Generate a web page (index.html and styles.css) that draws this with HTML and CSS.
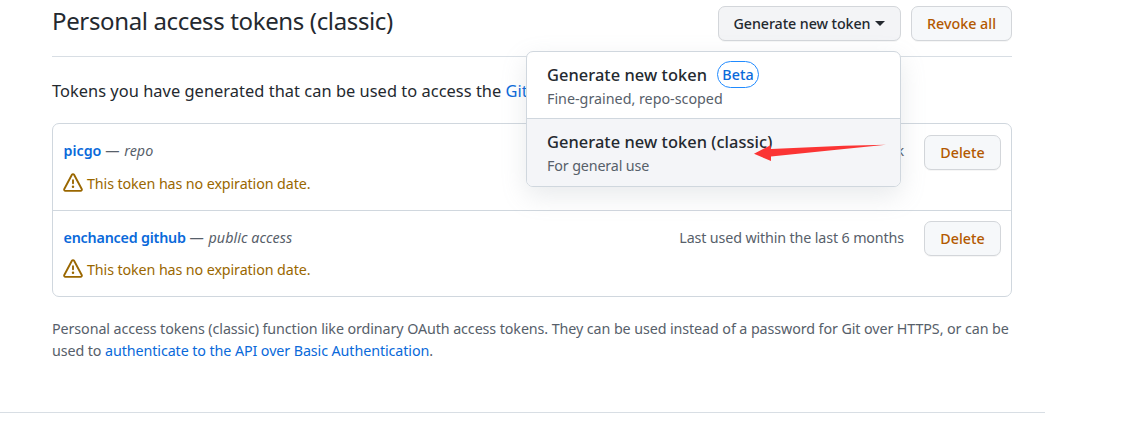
FILE: index.html
```
<!DOCTYPE html>
<html lang="en">
<head>
<meta charset="utf-8">
<title>Personal access tokens (classic)</title>
<link rel="stylesheet" href="styles.css">
</head>
<body>
<main class="page">
  <section class="content">
    <header class="subhead">
      <h2 class="title">Personal access tokens (classic)</h2>
      <div class="actions">
        <div class="dropdown">
          <button class="btn btn-open">Generate new token<span class="caret"></span></button>
          <div class="menu">
            <a class="menu-item">
              <span class="menu-title">Generate new token<span class="label">Beta</span></span>
              <span class="menu-desc">Fine-grained, repo-scoped</span>
            </a>
            <a class="menu-item menu-item-active">
              <span class="menu-title">Generate new token (classic)</span>
              <span class="menu-desc general">For general use</span>
            </a>
            <svg class="arrow" width="132" height="18" viewBox="0 0 132 18"><path d="M0 9.7L16.5 1.2L17 5L90 1.8L132 0.8L90 5L17 12.5V17Z" fill="#fb3434"/></svg>
          </div>
        </div>
        <button class="btn btn-danger btn-revoke">Revoke all</button>
      </div>
    </header>
    <p class="intro">Tokens you have generated that can be used to access the <a class="link">GitHub API</a>.</p>
    <ul class="tokens">
      <li class="token">
        <div class="info">
          <div class="name"><a class="link strong">picgo</a> <span>—</span> <em>repo</em></div>
          <div class="warning"><svg class="alert" viewBox="0 0 16 16"><path d="M6.457 1.047c.659-1.234 2.427-1.234 3.086 0l6.082 11.378A1.75 1.75 0 0 1 14.082 15H1.918a1.75 1.75 0 0 1-1.543-2.575Zm1.763.707a.25.25 0 0 0-.44 0L1.698 13.132a.25.25 0 0 0 .22.368h12.164a.25.25 0 0 0 .22-.368Zm.53 3.996v2.5a.75.75 0 0 1-1.5 0v-2.5a.75.75 0 0 1 1.5 0ZM9 11a1 1 0 1 1-2 0 1 1 0 0 1 2 0Z"/></svg><span>This token has no expiration date.</span></div>
        </div>
        <span class="used">Last used within the last week</span>
        <button class="btn btn-danger btn-delete">Delete</button>
      </li>
      <li class="token">
        <div class="info">
          <div class="name"><a class="link strong name-long">enchanced github</a> <span>—</span> <em>public access</em></div>
          <div class="warning"><svg class="alert" viewBox="0 0 16 16"><path d="M6.457 1.047c.659-1.234 2.427-1.234 3.086 0l6.082 11.378A1.75 1.75 0 0 1 14.082 15H1.918a1.75 1.75 0 0 1-1.543-2.575Zm1.763.707a.25.25 0 0 0-.44 0L1.698 13.132a.25.25 0 0 0 .22.368h12.164a.25.25 0 0 0 .22-.368Zm.53 3.996v2.5a.75.75 0 0 1-1.5 0v-2.5a.75.75 0 0 1 1.5 0ZM9 11a1 1 0 1 1-2 0 1 1 0 0 1 2 0Z"/></svg><span>This token has no expiration date.</span></div>
        </div>
        <span class="used">Last used within the last 6 months</span>
        <button class="btn btn-danger btn-delete">Delete</button>
      </li>
    </ul>
    <p class="note">Personal access tokens (classic) function like ordinary OAuth access tokens. They can be used instead of a password for Git over HTTPS, or can be<br>used to <a class="link">authenticate to the API over Basic Authentication</a>.</p>
  </section>
  <hr class="footer-rule">
</main>
</body>
</html>
```
FILE: styles.css
```
* { box-sizing: border-box; }
body {
  margin: 0;
  height: 429px;
  overflow: hidden;
  background: #fff;
  color: #24292f;
  font-family: "Noto Sans", "Open Sans", sans-serif;
  font-size: 14.3px;
  line-height: 22px;
  white-space: nowrap;
}
.page { width: 1045px; }
.content { width: 960px; margin-left: 52px; }
.subhead {
  display: flex;
  justify-content: space-between;
  height: 57px;
  padding-top: 6px;
  border-bottom: 1px solid #d8dee4;
}
.title {
  margin: 0;
  font-size: 24px;
  font-weight: 400;
  line-height: 29px;
  letter-spacing: -.36px;
}
.actions { display: flex; gap: 10px; }
.dropdown { position: relative; }
.btn {
  display: flex;
  align-items: center;
  justify-content: center;
  height: 35px;
  padding: 0;
  border: 1px solid #d3d6da;
  border-radius: 7px;
  background: #f6f8fa;
  box-shadow: 0 1px 0 rgba(27, 31, 36, .04);
  color: #24292f;
  font: 500 14.3px/22px "Noto Sans", "Open Sans", sans-serif;
}
.btn-open { width: 183px; gap: 5px; background: #f3f4f6; letter-spacing: -.1px; }
.btn-danger { color: #b35900; }
.btn-revoke { width: 101px; }
.btn-delete { width: 77px; }
.caret {
  border: 5px solid transparent;
  border-top: 5px solid #24292f;
  border-bottom: 0;
}
.menu {
  position: absolute;
  z-index: 2;
  top: 45px;
  right: 0;
  width: 375px;
  height: 136px;
  border: 1px solid #d0d7de;
  border-radius: 7px;
  background: #fff;
  box-shadow: 0 9px 26px rgba(140, 149, 159, .2);
}
.menu-item { display: block; height: 66px; padding: 9px 20px 0; }
.menu-item + .menu-item { height: 68px; border-top: 1px solid #d0d7de; }
.menu-item-active { background: #f4f5f8; border-radius: 0 0 6px 6px; }
.menu-title {
  display: flex;
  align-items: center;
  gap: 10px;
  height: 27px;
  font-size: 16.4px;
  font-weight: 500;
  letter-spacing: .06px;
}
.menu-desc { display: block; color: #57606a; line-height: 22px; }
.general { letter-spacing: -.14px; }
.label {
  width: 42px;
  height: 27px;
  border: 1px solid #218bff;
  border-radius: 14px;
  color: #0969da;
  font-size: 14.3px;
  line-height: 25px;
  text-align: center;
}
.arrow { position: absolute; left: 227px; top: 92px; }
.intro {
  margin: 22px 0 21px;
  font-size: 16.4px;
  line-height: 23px;
  letter-spacing: .035px;
}
.link { color: #0969da; }
.strong { font-weight: 600; }
.tokens {
  margin: 0;
  padding: 0;
  border: 1px solid #d0d7de;
  border-radius: 7px;
  list-style: none;
}
.token {
  display: flex;
  align-items: flex-start;
  height: 86px;
  padding: 11px 10px 0;
  color: #57606a;
}
.token + .token { height: 87px; margin-bottom: -1px; border-top: 1px solid #d0d7de; padding-top: 10px; }
.info { flex: 1; padding-top: 5px; }
.name { padding-left: .5px; }
.name em { margin-left: 1px; letter-spacing: .05px; }
.name-long { letter-spacing: -.2px; }
.token + .token .info, .token + .token .used { padding-top: 6px; }
.warning {
  display: flex;
  align-items: center;
  gap: 4px;
  height: 22px;
  margin-top: 11px;
  color: #9a6700;
  letter-spacing: -.11px;
}
.token + .token .warning { margin-top: 10px; }
.alert { width: 20px; height: 20px; margin-bottom: 2px; fill: currentColor; }
.used { margin-right: 20px; padding-top: 5px; letter-spacing: -.14px; }
.note { margin: 21px 0 0; color: #57606a; line-height: 22px; letter-spacing: -.094px; }
.footer-rule { height: 1px; margin: 50px 0 0; border: 0; background: #d8dee4; }
```
